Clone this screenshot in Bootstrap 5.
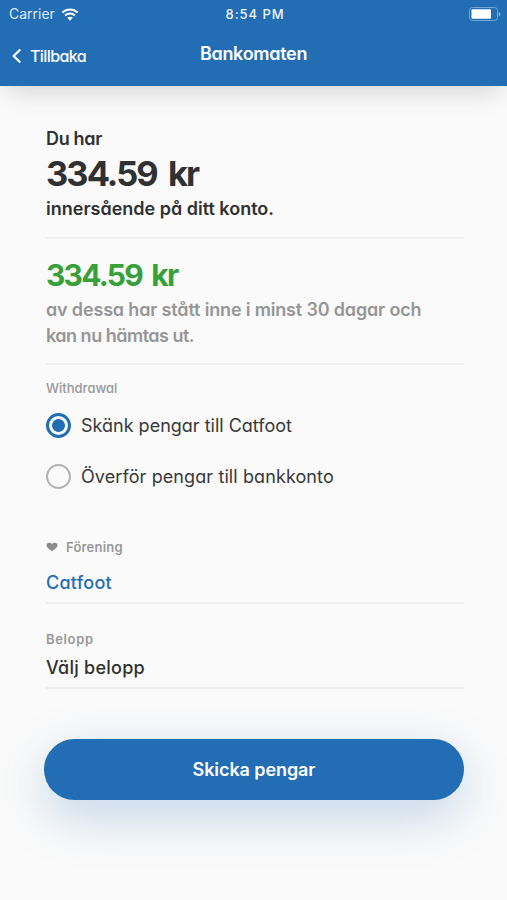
<!DOCTYPE html>
<html lang="sv">
<head>
<meta charset="utf-8">
<meta name="viewport" content="width=device-width, initial-scale=1">
<title>Bankomaten</title>
<link href="https://cdn.jsdelivr.net/npm/bootstrap@5.3.0/dist/css/bootstrap.min.css" rel="stylesheet">
<style>
body{font-family:Inter,"Liberation Sans",sans-serif;font-feature-settings:"cv11";background:#fafafa;color:#303132;font-size:18px;line-height:26px;height:900px;overflow:hidden}
.topbar{background:#236db4;height:86px;box-shadow:0 14px 22px -6px rgba(0,0,0,.13)}
.status-row{height:28px;padding:0 6px 0 9px;font-feature-settings:normal;line-height:28px}
.carrier{font-size:14px;color:#dcebfa}
.clock{font-size:13px;letter-spacing:.95px;font-weight:500;color:#eef6ff}
.title-row{height:52px;line-height:52px}
.side{flex:1 1 0}
.wifi{margin-left:-2px}
.back{font-size:16px;font-weight:500;letter-spacing:-.58px;padding:3px 0 0 12px;margin-right:-12px;gap:8px}
.title{font-weight:600;letter-spacing:-.3px}
.page{padding:40px 43px 0 46px}
.fw-mid{font-weight:500}
.amount{font-size:34.500px;line-height:43px;margin-bottom:1px;font-weight:700;letter-spacing:-1.950px;word-spacing:5px}
.amount-green{font-size:30px;line-height:40px;font-weight:700;letter-spacing:-1.750px;word-spacing:4px;color:#37a038}
.lead-in{letter-spacing:-.32px}
.muted{color:#969696;padding-top:2px}
.line-wide{letter-spacing:-.16px}
.line-tight{letter-spacing:-.5px}
.rule{height:2px;background:#f0f0f0}
.tag{font-size:13px;line-height:18px;color:#989898}
.choice{height:51px;gap:10px;color:#38393a}
.choice .form-check-input{width:25px;height:25px;margin:0;border:2px solid #b2b2b2;background-color:transparent;box-shadow:none;flex:none}
.choice .form-check-input:checked{border:3px solid #236db4;background:radial-gradient(circle,#236db4 6px,transparent 6.8px)}
.spread{letter-spacing:.25px}
.link-blue{color:#236db4}
.club{margin-top:36px}
.sum{margin-top:26px}
.send{height:61px;margin:50px 0 0 -2px;background:#236db4;font-size:18px;font-weight:600;letter-spacing:-.08px;box-shadow:0 16px 50px rgba(35,109,180,.26)}
.send:hover{background:#1d61a3}
</style>
</head>
<body>
<header class="topbar text-white">
  <div class="status-row d-flex align-items-center">
    <div class="side d-flex align-items-center gap-2"><span class="carrier">Carrier</span>
      <svg class="wifi" width="18" height="13" viewBox="0 0 17 13" fill="none" stroke="#fff" stroke-width="2.1"><path d="M.9 4.6C5.2.4 11.800.4 16.100 4.600M3.600 7.500C6.400 4.900 10.600 4.900 13.400 7.500"/><path d="M8.500 12.700 5.700 9.800Q8.500 7.500 11.300 9.800Z" fill="#fff" stroke="none"/></svg>
    </div>
    <span class="clock">8:54 PM</span>
    <div class="side d-flex justify-content-end">
      <svg width="33" height="15" viewBox="0 0 33 15"><rect x="1.500" y=".5" width="28" height="13" rx="3" fill="none" stroke="#73a5d6"/><rect x="3.500" y="2.300" width="19.500" height="9.400" rx="1" fill="#fff"/><path d="M30.800 5v4.400q1.500-.6 1.500-2.200T30.800 5z" fill="#8fb9e0"/></svg>
    </div>
  </div>
  <div class="title-row d-flex align-items-center">
    <div class="side back d-flex align-items-center"><svg width="10" height="16" viewBox="0 0 10 16" fill="none" stroke="#fff" stroke-width="2.200"><path d="M8.300 1.500 1.700 8l6.600 6.500"/></svg><span>Tillbaka</span></div>
    <span class="title">Bankomaten</span>
    <div class="side"></div>
  </div>
</header>
<main class="page">
  <section class="fw-semibold">
    <div class="lead-in">Du har</div>
    <div class="amount">334.59 kr</div>
    <div>innersående på ditt konto.</div>
  </section>
  <div class="rule" style="margin-top:15px"></div>
  <section class="fw-semibold pt-3">
    <div class="amount-green">334.59 kr</div>
    <div class="muted"><span class="line-wide">av dessa har stått inne i minst 30 dagar och</span><br><span class="line-tight">kan nu hämtas ut.</span></div>
  </section>
  <div class="rule" style="margin-top:14px"></div>
  <section>
    <div class="tag fw-mid" style="margin-top:14px">Withdrawal</div>
    <label class="choice d-flex align-items-center" style="margin-top:3px"><input class="form-check-input" type="radio" name="target" checked><span>Skänk pengar till Catfoot</span></label>
    <label class="choice d-flex align-items-center"><input class="form-check-input" type="radio" name="target"><span style="letter-spacing:.1px">Överför pengar till bankkonto</span></label>
  </section>
  <section class="club">
    <div class="tag fw-semibold d-flex align-items-center" style="gap:8px;letter-spacing:.2px"><svg width="12" height="10" viewBox="0 0 12 10" fill="#8d8d8d"><path d="M6 9.500C4.500 7.500.5 6.300.5 3 .5.600 4.200-.300 6 2.200 7.800-.300 11.500.600 11.500 3 11.500 6.300 7.500 7.500 6 9.500z"/></svg><span>Förening</span></div>
    <div class="fw-mid link-blue spread" style="margin-top:14px">Catfoot</div>
    <div class="rule" style="margin-top:6px"></div>
  </section>
  <section class="sum">
    <div class="tag fw-semibold" style="letter-spacing:.65px">Belopp</div>
    <div class="fw-mid spread" style="margin-top:7px">Välj belopp</div>
    <div class="rule" style="margin-top:6px"></div>
  </section>
  <div class="d-flex"><button class="send btn rounded-pill text-white border-0 flex-grow-1" type="button">Skicka pengar</button></div>
</main>
<script src="https://cdn.jsdelivr.net/npm/bootstrap@5.3.0/dist/js/bootstrap.bundle.min.js"></script>
</body>
</html>
